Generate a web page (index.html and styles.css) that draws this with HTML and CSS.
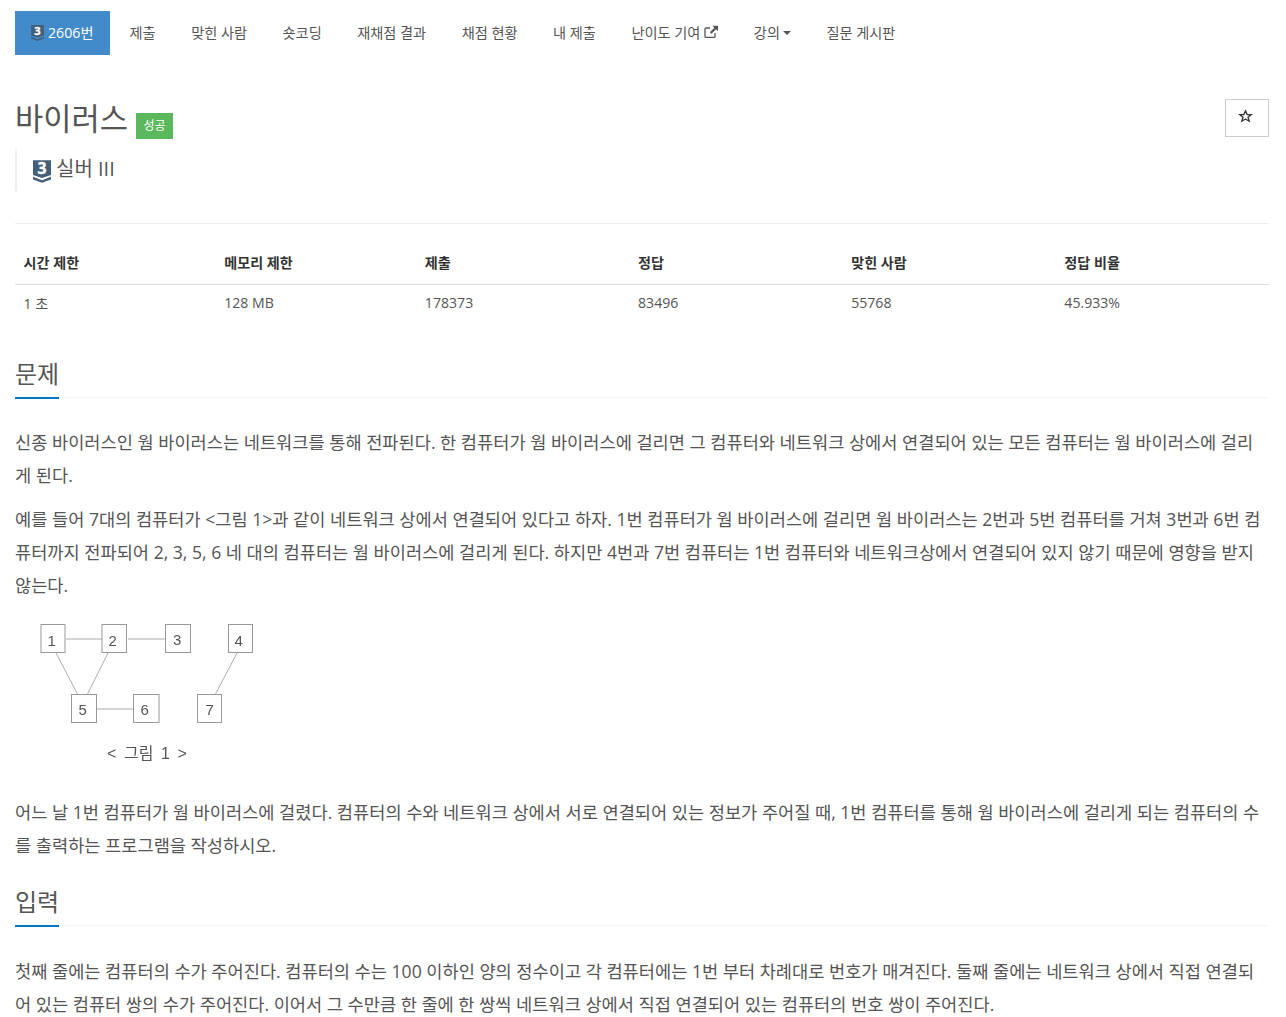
FILE: index.html
```html
<!DOCTYPE html>
<html lang="ko">
<head>
    <meta charset="utf-8">
    <title>바이러스</title>
    <link rel="stylesheet" href="styles.css">
</head>
<body>
<div class="container">
    <ul class="tabs">
        <li class="active">
            <a href="#"><svg class="tier tier-small" viewBox="0 0 24 30"><path fill="#435f7a" d="M0 0h24v19.500l-12 4-12-4z"/><path fill="#435f7a" d="M0 22l12 4.500 12-4.500v3.500l-12 4.500-12-4.500z"/><text x="12" y="18" class="tier-num">3</text></svg> 2606번</a>
        </li>
        <li><a href="#">제출</a></li>
        <li><a href="#">맞힌 사람</a></li>
        <li><a href="#">숏코딩</a></li>
        <li><a href="#">재채점 결과</a></li>
        <li><a href="#">채점 현황</a></li>
        <li><a href="#">내 제출</a></li>
        <li><a href="#">난이도 기여 <svg class="ext" viewBox="0 0 14 14"><path fill="none" stroke="#555" stroke-width="1.3" d="M11 8v3.400a1 1 0 0 1-1 1H2a1 1 0 0 1-1-1V4a1 1 0 0 1 1-1h4"/><path fill="#555" d="M8.500.8H14v5.500l-2-2-4.500 4.500-1.600-1.600 4.500-4.500z"/></svg></a></li>
        <li><a class="dropdown" href="#">강의<span class="caret"></span></a></li>
        <li><a href="#">질문 게시판</a></li>
    </ul>

    <div class="title-row">
        <h1 class="title">바이러스 <span class="label">성공</span></h1>
        <button class="star" type="button"><svg viewBox="0 0 16 16"><path fill="none" stroke="#333" stroke-width="1.4" d="M8 2l1.800 4h4.200l-3.300 2.700 1.200 4.300L8 10.600 4.100 13l1.200-4.300L2 6h4.200z"/></svg></button>
    </div>
    <div class="rank">
        <svg class="tier tier-big" viewBox="0 0 24 30"><path fill="#435f7a" d="M0 0h24v19.500l-12 4-12-4z"/><path fill="#435f7a" d="M0 22l12 4.500 12-4.500v3.500l-12 4.500-12-4.500z"/><text x="12" y="18" class="tier-num">3</text></svg>
        <span class="rank-name">실버 III</span>
    </div>
    <hr class="divider">

    <table class="info">
        <thead>
            <tr>
                <th class="col-16">시간 제한</th>
                <th class="col-16">메모리 제한</th>
                <th class="col-17">제출</th>
                <th class="col-17">정답</th>
                <th class="col-17">맞힌 사람</th>
                <th class="col-17">정답 비율</th>
            </tr>
        </thead>
        <tbody>
            <tr>
                <td>1 초</td>
                <td>128 MB</td>
                <td>178373</td>
                <td>83496</td>
                <td>55768</td>
                <td>45.933%</td>
            </tr>
        </tbody>
    </table>

    <section class="problem">
        <div class="headline"><h2>문제</h2></div>
        <p>신종 바이러스인 웜 바이러스는 네트워크를 통해 전파된다. 한 컴퓨터가 웜 바이러스에 걸리면 그 컴퓨터와 네트워크 상에서 연결되어 있는 모든 컴퓨터는 웜 바이러스에 걸리게 된다.</p>
        <p>예를 들어 7대의 컴퓨터가 &lt;그림 1&gt;과 같이 네트워크 상에서 연결되어 있다고 하자. 1번 컴퓨터가 웜 바이러스에 걸리면 웜 바이러스는 2번과 5번 컴퓨터를 거쳐 3번과 6번 컴퓨터까지 전파되어 2, 3, 5, 6 네 대의 컴퓨터는 웜 바이러스에 걸리게 된다. 하지만 4번과 7번 컴퓨터는 1번 컴퓨터와 네트워크상에서 연결되어 있지 않기 때문에 영향을 받지 않는다.</p>
        <svg class="figure" width="250" height="165" viewBox="0 0 250 165">
            <g class="edges">
                <path d="M46 29H82M108 29H146M36 43L58 85M88 43L67 85M76 99H114M217 43L195 85"/>
            </g>
            <g class="boxes">
                <rect x="21" y="14.500" width="24" height="28"/>
                <rect x="82" y="14.500" width="24.500" height="28"/>
                <rect x="145.500" y="14.500" width="25" height="28"/>
                <rect x="208.500" y="14.500" width="24" height="28"/>
                <rect x="51.500" y="84.500" width="25" height="28"/>
                <rect x="113.500" y="84.500" width="25.500" height="28"/>
                <rect x="177.500" y="84.500" width="24" height="28"/>
            </g>
            <g class="nums">
                <text x="27.500" y="35.500">1</text>
                <text x="88.500" y="35.500">2</text>
                <text x="153" y="34.500">3</text>
                <text x="214.500" y="35.500">4</text>
                <text x="58.500" y="104.500">5</text>
                <text x="120.500" y="104.500">6</text>
                <text x="185.500" y="104.500">7</text>
            </g>
            <text class="cap" x="87" y="149">&lt; 그림 1 &gt;</text>
        </svg>
        <p>어느 날 1번 컴퓨터가 웜 바이러스에 걸렸다. 컴퓨터의 수와 네트워크 상에서 서로 연결되어 있는 정보가 주어질 때, 1번 컴퓨터를 통해 웜 바이러스에 걸리게 되는 컴퓨터의 수를 출력하는 프로그램을 작성하시오.</p>
    </section>

    <section class="problem">
        <div class="headline"><h2>입력</h2></div>
        <p class="input-text">첫째 줄에는 컴퓨터의 수가 주어진다. 컴퓨터의 수는 100 이하인 양의 정수이고 각 컴퓨터에는 1번 부터 차례대로 번호가 매겨진다. 둘째 줄에는 네트워크 상에서 직접 연결되어 있는 컴퓨터 쌍의 수가 주어진다. 이어서 그 수만큼 한 줄에 한 쌍씩 네트워크 상에서 직접 연결되어 있는 컴퓨터의 번호 쌍이 주어진다.</p>
    </section>
</div>
</body>
</html>
```

FILE: styles.css
```css
* {
    box-sizing: border-box;
}
html, body {
    height: 1017px;
    overflow: hidden;
}
body {
    margin: 0;
    background: #fff;
    color: #555;
    font-family: "Open Sans", "Noto Sans CJK KR", sans-serif;
    font-size: 14px;
}
a {
    color: inherit;
    text-decoration: none;
}
.container {
    padding: 11px 17px 0 15px;
}
.tabs {
    display: flex;
    list-style: none;
    margin: 0;
    padding: 0;
    height: 44px;
    font-size: 14.2px;
}
.tabs li + li {
    margin-left: 5.5px;
}
.tabs a {
    display: flex;
    align-items: center;
    gap: 4px;
    height: 44px;
    padding: 0 15px 3px;
}
.tabs .dropdown {
    gap: 0;
}
.tabs .active {
    margin-right: -1px;
}
.tabs .active a {
    padding: 0 16.5px 3px 16px;
    background: #428bca;
    color: #fff;
}
.tier {
    display: block;
    overflow: visible;
}
.tier-small {
    width: 13px;
    height: 16px;
    margin-top: 3px;
}
.tier-big {
    width: 18px;
    height: 23px;
    margin-top: 2px;
}
.tier-num {
    fill: #fff;
    stroke: #fff;
    stroke-width: .6;
    font-family: "Open Sans", sans-serif;
    font-size: 21px;
    font-weight: 700;
    text-anchor: middle;
}
.ext {
    width: 14px;
    height: 14px;
}
.caret {
    display: inline-block;
    width: 0;
    height: 0;
    margin-left: 3px;
    margin-top: 2px;
    border-top: 4px solid #555;
    border-left: 4px solid transparent;
    border-right: 4px solid transparent;
}
.title-row {
    display: flex;
    justify-content: space-between;
    margin-top: 44px;
    height: 50px;
}
.title {
    margin: 0;
    font-size: 30.7px;
    font-weight: 400;
    line-height: 38px;
}
.label {
    display: inline-block;
    vertical-align: 0;
    margin-left: 0;
    padding: 0 7.5px;
    height: 26px;
    line-height: 26px;
    background: #5cb85c;
    color: #fff;
    font-size: 12px;
    font-weight: 400;
}
.star {
    width: 44px;
    height: 38px;
    background: #fff;
    border: 1px solid #ccc;
    padding: 0 4px 0 0;
}
.star svg {
    display: block;
    width: 15px;
    height: 15px;
    margin: 0 auto 4px;
}
.rank {
    display: flex;
    align-items: center;
    gap: 5px;
    height: 42px;
    border-left: 2px solid #eee;
    padding: 0 0 0 16px;
    font-size: 20px;
}
.rank-name {
    margin-top: -5px;
}
.divider {
    margin: 32px 0 0;
    border: 0;
    border-top: 1px solid #eee;
}
.info {
    width: 100%;
    margin-top: 20px;
    border-collapse: collapse;
    table-layout: fixed;
}
.info th, .info td {
    padding: 0 8.6px;
    font-size: 14.1px;
    text-align: left;
}
.info th {
    height: 40px;
    padding-bottom: 3px;
    border-bottom: 1px solid #ddd;
    color: #333;
}
.info td {
    height: 37px;
}
.col-16 {
    width: 16%;
}
.col-17 {
    width: 17%;
}
.headline {
    border-bottom: 1px dotted #ececec;
    height: 44px;
}
.headline h2 {
    display: inline-block;
    margin: 0;
    height: 45px;
    padding-top: 2px;
    border-bottom: 2px solid #0076c0;
    font-size: 24px;
    font-weight: 400;
    line-height: 36px;
}
.problem {
    margin-top: 20px;
}
.problem:first-of-type {
    margin-top: 33px;
}
.problem p {
    margin: 0 0 11px;
    padding-right: 2px;
    font-size: 17.6px;
    line-height: 33px;
}
.problem .headline + p {
    margin-top: 28px;
}
.problem .headline + .input-text {
    margin-top: 29px;
}
.figure {
    display: block;
    margin: -3px 0 21px 5px;
    filter: blur(.4px);
}
.edges path {
    fill: none;
    stroke: #aaa;
}
.boxes rect {
    fill: #fff;
    stroke: #999;
}
.nums text, .cap {
    fill: #555;
    font-family: "Liberation Sans", "Noto Sans CJK KR", sans-serif;
    font-size: 15px;
}
.cap {
    font-size: 16px;
    word-spacing: 3.2px;
}
```
